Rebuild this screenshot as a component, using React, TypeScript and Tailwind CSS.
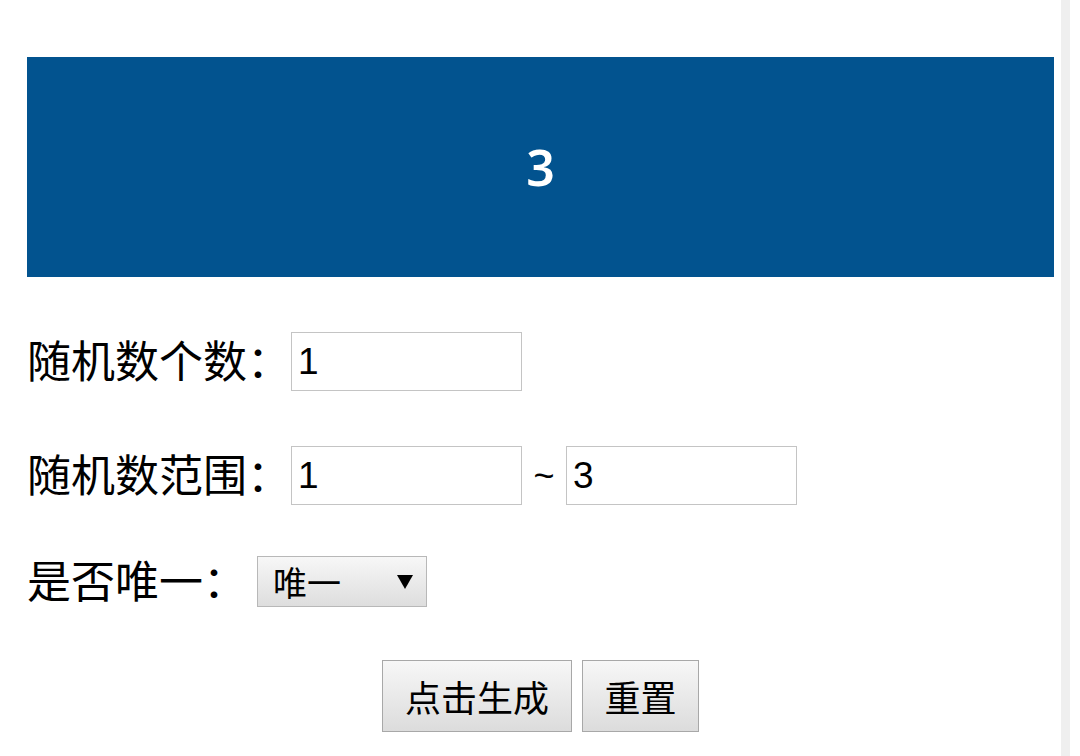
export default function App() {
  const label = "font-['Noto_Sans_CJK_SC','Noto_Sans',sans-serif] text-[44px] leading-none -mt-[6px]";
  const field =
    "h-[59px] w-[231px] border border-[#c4c4c4] px-[6px] font-['Liberation_Sans',Arial,sans-serif] text-[37px] outline-none";
  const btn =
    "h-[72px] border border-[#a8a8a8] bg-gradient-to-b from-[#f7f7f7] to-[#dcdcdc] font-['Noto_Sans_CJK_SC',sans-serif] text-[36px]";

  return (
    <div className="flex h-[756px] w-[1080px] overflow-hidden bg-white">
      <div className="flex w-[1061px] flex-col pl-[27px] pr-[7px] pt-[57px] text-black">
        <div className="flex h-[220px] items-center justify-center bg-[#02538f]">
          <span className="font-['Noto_Sans','Open_Sans',sans-serif] text-[50px] font-semibold text-white">
            3
          </span>
        </div>

        <div className="mt-[55px] flex h-[59px] items-center">
          <span className={label}>随机数个数：</span>
          <input defaultValue="1" className={field} />
        </div>

        <div className="mt-[55px] flex h-[59px] items-center">
          <span className={label}>随机数范围：</span>
          <input defaultValue="1" className={field} />
          <span className="w-[44px] text-center font-['Liberation_Sans',Arial,sans-serif] text-[36px]">~</span>
          <input defaultValue="3" className={field} />
        </div>

        <div className="mt-[51px] flex h-[51px] items-center">
          <span className={label}>是否唯一：</span>
          <div className="ml-[10px] flex h-[51px] w-[170px] items-center justify-between border border-[#b8b8b8] bg-gradient-to-b from-[#f7f7f7] to-[#dedede] pl-[15px] pr-[13px]">
            <span className="font-['Noto_Sans_CJK_SC',sans-serif] text-[34px] leading-none">唯一</span>
            <svg width="16" height="14" viewBox="0 0 16 14">
              <path d="M0 0 H16 L8 14 Z" fill="#000" />
            </svg>
          </div>
        </div>

        <div className="mt-[53px] flex justify-center gap-[10px]">
          <button className={`${btn} w-[190px]`}>点击生成</button>
          <button className={`${btn} w-[117px]`}>重置</button>
        </div>
      </div>
      <div className="h-full w-[9px] bg-[#efefef]" />
    </div>
  );
}
